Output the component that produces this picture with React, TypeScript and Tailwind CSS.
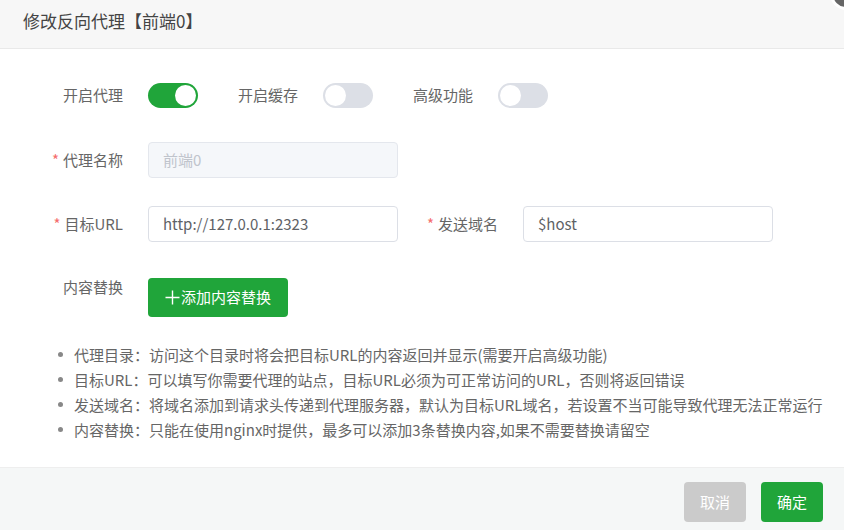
import { useState } from "react";

type ToggleProps = {
  on: boolean;
  onChange: (v: boolean) => void;
};

function Toggle({ on, onChange }: ToggleProps) {
  return (
    <button
      type="button"
      onClick={() => onChange(!on)}
      className={`relative h-[25px] w-[50px] shrink-0 rounded-full ${on ? "bg-[#20a53a]" : "bg-[#dcdfe6]"}`}
    >
      <span
        className={`absolute top-[2px] h-[21px] w-[21px] rounded-full bg-white ${on ? "left-[27px]" : "left-[2px]"}`}
      />
    </button>
  );
}

function Label({ text, required, wide = true }: { text: string; required?: boolean; wide?: boolean }) {
  return (
    <div
      className={`flex shrink-0 items-center justify-end pr-[25px] text-[15px] text-[#666] ${wide ? "w-[148px]" : "w-[125px]"}`}
    >
      {required && <span className="mr-[4px] text-[#f56c6c]">*</span>}
      {text}
    </div>
  );
}

const tips = [
  "代理目录：访问这个目录时将会把目标URL的内容返回并显示(需要开启高级功能)",
  "目标URL：可以填写你需要代理的站点，目标URL必须为可正常访问的URL，否则将返回错误",
  "发送域名：将域名添加到请求头传递到代理服务器，默认为目标URL域名，若设置不当可能导致代理无法正常运行",
  "内容替换：只能在使用nginx时提供，最多可以添加3条替换内容,如果不需要替换请留空",
];

export default function App() {
  const [proxy, setProxy] = useState(true);
  const [cache, setCache] = useState(false);
  const [advanced, setAdvanced] = useState(false);

  return (
    <div
      className="relative h-[530px] w-[844px] overflow-hidden bg-white"
      style={{ fontFamily: '"Noto Sans CJK SC", "Noto Sans", sans-serif' }}
    >
      <div className="absolute right-[-18px] top-[-22px] h-[32px] w-[32px] rounded-full border-[3px] border-white bg-[#666]" />

      <div className="flex h-[49px] items-center border-b border-[#e9e9e9] bg-[#f7f7f7] pb-[6px] pl-[23px] text-[17px] text-[#444]">
        修改反向代理【前端0】
      </div>

      <div className="h-[418px] pt-[34px]">
        <div className="flex h-[25px] items-center">
          <Label text="开启代理" />
          <Toggle on={proxy} onChange={setProxy} />
          <div className="ml-[40px] mr-[25px] text-[15px] text-[#666]">开启缓存</div>
          <Toggle on={cache} onChange={setCache} />
          <div className="ml-[40px] mr-[25px] text-[15px] text-[#666]">高级功能</div>
          <Toggle on={advanced} onChange={setAdvanced} />
        </div>

        <div className="mt-[34px] flex h-[36px] items-center">
          <Label text="代理名称" required />
          <div className="flex h-[36px] w-[250px] items-center rounded-[4px] border border-[#e4e7ed] bg-[#f5f7fa] px-[14px] text-[15px] text-[#c0c4cc]">
            前端0
          </div>
        </div>

        <div className="mt-[28px] flex h-[36px] items-center">
          <Label text="目标URL" required />
          <div className="flex h-[36px] w-[250px] items-center rounded-[4px] border border-[#dcdfe6] px-[14px] text-[15px] text-[#606266]">
            http://127.0.0.1:2323
          </div>
          <Label text="发送域名" required wide={false} />
          <div className="flex h-[36px] w-[250px] items-center rounded-[4px] border border-[#dcdfe6] px-[14px] text-[15px] text-[#606266]">
            $host
          </div>
        </div>

        <div className="mt-[36px] flex items-start">
          <div className="flex w-[148px] shrink-0 justify-end pr-[25px] pt-[1px] text-[15px] leading-[16px] text-[#666]">
            内容替换
          </div>
          <button
            type="button"
            className="flex h-[39px] w-[140px] items-center justify-center gap-[1px] rounded-[4px] bg-[#20a53a] text-[15px] text-white"
          >
            <svg width="15" height="15" viewBox="0 0 15 15" fill="none" stroke="currentColor" strokeWidth="1.4">
              <path d="M0.5 7.5h14M7.5 0.5v14" />
            </svg>
            添加内容替换
          </button>
        </div>

        <ul className="mt-[25px] pl-[58px] text-[15px] leading-[25px] text-[#666]">
          {tips.map((t) => (
            <li key={t} className="flex items-center whitespace-nowrap">
              <span className="mr-[11px] h-[5px] w-[5px] rounded-full bg-[#888]" />
              {t}
            </li>
          ))}
        </ul>
      </div>

      <div className="flex h-[63px] items-start justify-end gap-[15px] border-t border-[#eee] bg-[#f5f7f7] pr-[21px] pt-[14px]">
        <button type="button" className="h-[40px] w-[62px] rounded-[4px] bg-[#cbcbcb] text-[15px] text-white">
          取消
        </button>
        <button type="button" className="h-[40px] w-[62px] rounded-[4px] bg-[#20a53a] text-[15px] text-white">
          确定
        </button>
      </div>
    </div>
  );
}
